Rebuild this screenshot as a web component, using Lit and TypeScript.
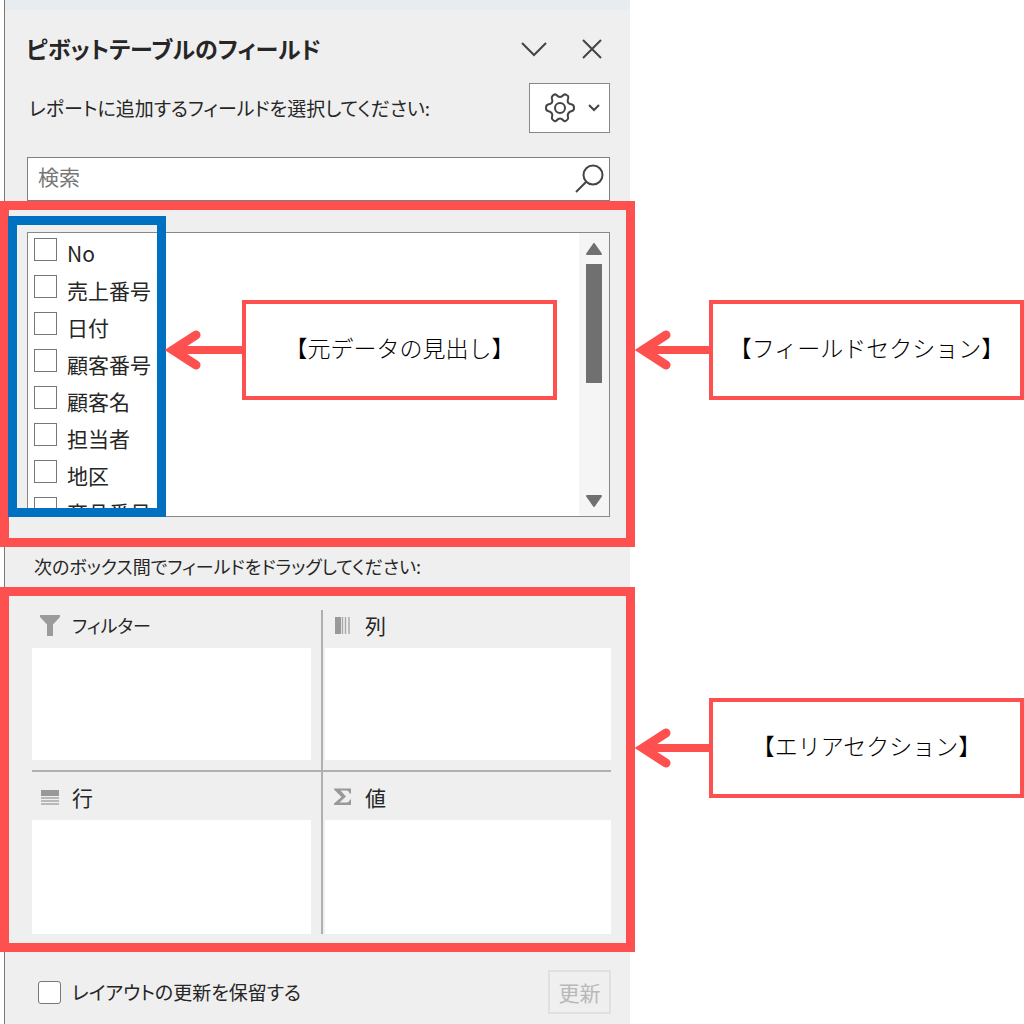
import { LitElement, html, css, svg } from "lit";
import { customElement, property, state } from "lit/decorators.js";

const FIELDS = ["No", "売上番号", "日付", "顧客番号", "顧客名", "担当者", "地区", "商品番号"];

const filterIcon = svg`<path d="M0 1H20V3L13 10.500V22H7V10.500L0 3Z" fill="#9b9b9b"/>`;
const columnIcon = svg`<path d="M2 3H8V20H2Z" fill="#999"/><path d="M9.500 3V20M12.500 3V20M16 3V20" stroke="#a8a8a8" stroke-width="1.400"/>`;
const rowIcon = svg`<path d="M1 4H19V10H1Z" fill="#999"/><path d="M1 12H19M1 15H19M1 18H19" stroke="#a8a8a8" stroke-width="1.600"/>`;
const sigmaIcon = svg`<path d="M1 2.500H18V7.500H16.500Q16 4.500 13 4.500H7.500L13 10.500L6.500 16.500H13.500Q16 16.500 17 13.500H18V19H1V17.500L8.500 11L1 3.500Z" fill="#999"/>`;

const AREAS = [
  { name: "フィルター", icon: filterIcon },
  { name: "列", icon: columnIcon },
  { name: "行", icon: rowIcon },
  { name: "値", icon: sigmaIcon },
];

@customElement("callout-note")
export class CalloutNote extends LitElement {
  @property() text = "";

  static styles = css`
    :host {
      display: flex;
      align-items: center;
      height: 100px;
    }
    .arrow {
      flex: 1;
      min-width: 0;
      height: 42px;
      fill: none;
      stroke: #ff5050;
      stroke-width: 9;
    }
    .box {
      box-sizing: border-box;
      display: flex;
      align-items: center;
      justify-content: center;
      width: 315px;
      height: 100%;
      border: 4px solid #ff5050;
      background: #fff;
      color: #000;
      font-size: 23px;
      font-weight: 300;
      line-height: 32px;
      white-space: nowrap;
      padding-bottom: 6px;
    }
  `;

  render() {
    return html`
      <svg class="arrow" aria-hidden="true">
        <path d="M31 6L8 21L31 36" stroke-linecap="round" stroke-linejoin="miter" />
        <line x1="8" y1="21" x2="100%" y2="21" stroke-width="8" />
      </svg>
      <div class="box">${this.text}</div>
    `;
  }
}

@customElement("app-root")
export class AppRoot extends LitElement {
  @state() private checked = new Set<string>();

  static styles = css`
    :host {
      display: block;
      min-height: 100vh;
      overflow: hidden;
      background: #fff;
      color: #262626;
      font-family: "Noto Sans CJK JP", sans-serif;
      font-size: 21px;
      line-height: 32px;
    }
    * {
      box-sizing: border-box;
    }
    button,
    input {
      font: inherit;
      color: inherit;
      margin: 0;
    }
    .panel {
      display: flex;
      flex-direction: column;
      min-height: 100vh;
      margin: 0 394px 0 4px;
      border-left: 1px solid #777;
      background: #efefef;
      font-feature-settings: "palt";
    }
    .strip {
      height: 10px;
      background: #e7ecf0;
    }
    .header,
    .intro,
    .footer {
      display: flex;
      align-items: center;
      justify-content: space-between;
      padding: 0 20px 0 21px;
    }
    .header {
      height: 73px;
      padding-top: 4px;
    }
    h1 {
      margin: 0;
      padding-bottom: 2px;
      font-size: 23px;
      font-weight: 700;
      line-height: 32px;
    }
    .window-actions {
      display: flex;
      gap: 22px;
    }
    .icon-button {
      display: grid;
      place-items: center;
      width: 36px;
      height: 36px;
      padding: 0;
      border: 0;
      background: none;
    }
    svg {
      display: block;
    }
    .stroke {
      fill: none;
      stroke: #444;
      stroke-width: 2;
    }
    .intro {
      height: 50px;
      padding-left: 24px;
      font-size: 19px;
    }
    p {
      margin: 0;
    }
    .settings {
      display: flex;
      align-items: center;
      justify-content: space-between;
      width: 81px;
      height: 50px;
      padding: 0 9px 0 14px;
      border: 1px solid #888;
      background: #fff;
    }
    .search {
      display: flex;
      align-items: center;
      height: 44px;
      margin: 24px 20px 0 22px;
      padding: 0 5px 0 10px;
      border: 1px solid #808080;
      background: #fff;
    }
    .search input {
      flex: 1;
      min-width: 0;
      height: 38px;
      padding: 0 0 6px;
      border: 0;
      outline: 0;
      background: none;
    }
    .search input::placeholder {
      color: #777;
      opacity: 1;
    }
    .section {
      position: relative;
    }
    .frame {
      position: absolute;
      inset: 0 -5px;
      border: 9px solid #ff5050;
      pointer-events: none;
    }
    .source-frame {
      position: absolute;
      top: 15px;
      left: 3px;
      width: 158px;
      height: 301px;
      border: 9px solid #0070c0;
      pointer-events: none;
    }
    callout-note {
      position: absolute;
      top: 99px;
      left: calc(100% + 5px);
      width: 389px;
      font-feature-settings: normal;
    }
    .areas callout-note {
      top: 111px;
    }
    callout-note.source {
      left: 160px;
      width: 392px;
    }
    .fields {
      padding: 31px 20px 30px 22px;
    }
    .list {
      display: flex;
      height: 285px;
      border: 1px solid #888;
      background: #fff;
    }
    .items {
      flex: 1;
      margin: 0;
      padding: 5px 0 0 6px;
      list-style: none;
      overflow: hidden;
    }
    .item {
      display: flex;
      align-items: flex-start;
      gap: 10px;
      height: 37px;
      line-height: 30px;
    }
    input[type="checkbox"] {
      appearance: none;
      flex: none;
      width: 23px;
      height: 23px;
      border: 1px solid #777;
      background: #fff;
    }
    input[type="checkbox"]:checked {
      background: #777;
    }
    .scrollbar {
      display: flex;
      flex-direction: column;
      width: 30px;
      background: #f5f5f5;
      align-items: center;
    }
    .scrollbar button {
      display: grid;
      place-items: center;
      width: 30px;
      height: 31px;
      padding: 0;
      border: 0;
      background: none;
    }
    .thumb {
      width: 16px;
      height: 119px;
      margin-bottom: auto;
      background: #707070;
    }
    .hint {
      padding: 3px 29px 5px;
      font-size: 18px;
    }
    .areas {
      padding: 23px 19px 18px 27px;
    }
    .grid {
      display: grid;
      grid-template-columns: 291fr 288fr;
      grid-template-rows: 162px 162px;
    }
    .area {
      display: flex;
      flex-direction: column;
    }
    .area:nth-child(odd) {
      padding-right: 10px;
      border-right: 2px solid #b0b0b0;
    }
    .area:nth-child(even) {
      padding-left: 2px;
    }
    .area:nth-child(-n + 2) {
      padding-bottom: 10px;
      border-bottom: 2px solid #b0b0b0;
    }
    .area h2 {
      display: flex;
      align-items: center;
      gap: 10px;
      margin: 0;
      padding: 0 8px 7px;
      font-size: 21px;
      font-weight: 400;
      line-height: 31px;
    }
    .area:first-child h2 {
      font-size: 18px;
    }
    .area:nth-child(n + 3) h2 {
      padding-top: 10px;
    }
    .area h2 svg {
      margin-bottom: 2px;
    }
    .drop {
      flex: 1;
      background: #fff;
    }
    .footer {
      height: 72px;
      padding: 8px 19px 0 33px;
      font-size: 19px;
    }
    .defer {
      display: flex;
      align-items: center;
      gap: 11px;
    }
    .defer input[type="checkbox"] {
      border-radius: 3px;
    }
    .update {
      width: 63px;
      height: 44px;
      padding: 0;
      border: 2px solid #e0e0e0;
      background: #efefef;
      color: #b8b8b8;
      font-size: 21px;
    }
  `;

  private toggle(name: string) {
    const next = new Set(this.checked);
    next.has(name) ? next.delete(name) : next.add(name);
    this.checked = next;
  }

  render() {
    return html`
      <main class="panel">
        <div class="strip"></div>
        <header class="header">
          <h1>ピボットテーブルのフィールド</h1>
          <div class="window-actions">
            <button class="icon-button" aria-label="オプション">
              <svg class="stroke" width="28" height="18"><path d="M2 3L14 15L26 3" /></svg>
            </button>
            <button class="icon-button" aria-label="閉じる">
              <svg class="stroke" width="20" height="20"><path d="M1 1L19 19M19 1L1 19" /></svg>
            </button>
          </div>
        </header>
        <div class="intro">
          <p>レポートに追加するフィールドを選択してください:</p>
          <button class="settings" aria-label="ツール">
            <svg class="stroke" width="32" height="30" viewBox="0 0 32 30">
              <path
                stroke-linejoin="round"
                d="M9.500 2Q11 .8 12.500 2Q16 6 19.500 2Q21 .8 22.500 2L24 3Q24.500 4 24 6C23 9.500 24.500 11 28 11.500Q30 12 30 15Q30 17.500 28 18C24.500 19 23 20.500 24 24Q24.500 26 23 27L21.500 28Q20.500 28.500 19.500 27.500Q16 23.500 12.500 27.500Q11.500 28.500 10.500 28L9 27Q7.500 26 8 24C9 20.500 7.500 19 4 18Q2 17.500 2 15Q2 12 4 11.500C7.500 11 9 9.500 8 6Q7.500 4 8.500 3Z"
              />
              <circle cx="16" cy="15" r="5" />
            </svg>
            <svg class="stroke" width="12" height="8"><path d="M1 1L6 6L11 1" /></svg>
          </button>
        </div>
        <div class="search">
          <input type="text" placeholder="検索" aria-label="検索" />
          <svg class="stroke" width="30" height="32">
            <circle cx="19" cy="12" r="9.500" /><path d="M12 19L2 29" />
          </svg>
        </div>

        <section class="section fields">
          <div class="list">
            <ul class="items">
              ${FIELDS.map(
                (name) => html`<li>
                  <label class="item">
                    <input
                      type="checkbox"
                      .checked=${this.checked.has(name)}
                      @change=${() => this.toggle(name)}
                    />${name}
                  </label>
                </li>`
              )}
            </ul>
            <div class="scrollbar">
              <button aria-label="上へ">
                <svg width="16" height="12"><path d="M8 1L15 11H1Z" fill="#707070" stroke="#707070" stroke-width="2" stroke-linejoin="round" /></svg>
              </button>
              <div class="thumb"></div>
              <button aria-label="下へ">
                <svg width="16" height="12"><path d="M8 11L15 1H1Z" fill="#707070" stroke="#707070" stroke-width="2" stroke-linejoin="round" /></svg>
              </button>
            </div>
          </div>
          <div class="frame"></div>
          <div class="source-frame"></div>
          <callout-note class="source" text="【元データの見出し】"></callout-note>
          <callout-note text="【フィールドセクション】"></callout-note>
        </section>

        <p class="hint">次のボックス間でフィールドをドラッグしてください:</p>

        <section class="section areas">
          <div class="grid">
            ${AREAS.map(
              (area) => html`<div class="area">
                <h2><svg width="22" height="22" aria-hidden="true">${area.icon}</svg>${area.name}</h2>
                <div class="drop"></div>
              </div>`
            )}
          </div>
          <div class="frame"></div>
          <callout-note text="【エリアセクション】"></callout-note>
        </section>

        <footer class="footer">
          <label class="defer"><input type="checkbox" />レイアウトの更新を保留する</label>
          <button class="update" disabled>更新</button>
        </footer>
      </main>
    `;
  }
}
